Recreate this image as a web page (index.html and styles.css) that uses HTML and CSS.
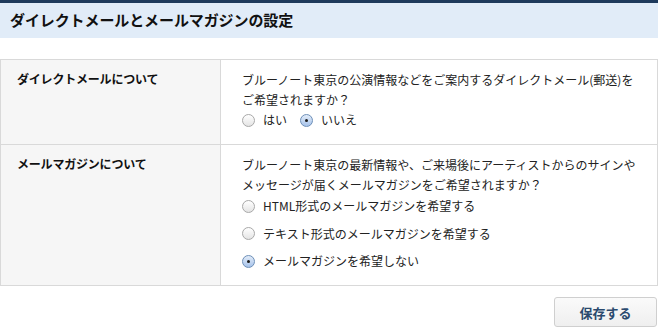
FILE: index.html
```html
<!DOCTYPE html>
<html lang="ja">
<head>
<meta charset="utf-8">
<link rel="stylesheet" href="styles.css">
</head>
<body>
<div class="page">
  <h1 class="title">ダイレクトメールとメールマガジンの設定</h1>
  <div class="table">
    <div class="row">
      <div class="label">ダイレクトメールについて</div>
      <div class="cell">
        <p class="q">ブルーノート東京の公演情報などをご案内するダイレクトメール(郵送)を<br>ご希望されますか？</p>
        <div class="inline-opts">
          <label class="opt"><span class="radio"></span>はい</label>
          <label class="opt"><span class="radio on"></span>いいえ</label>
        </div>
      </div>
    </div>
    <div class="row">
      <div class="label">メールマガジンについて</div>
      <div class="cell">
        <p class="q">ブルーノート東京の最新情報や、ご来場後にアーティストからのサインや<br>メッセージが届くメールマガジンをご希望されますか？</p>
        <div class="stack-opts">
          <label class="opt"><span class="radio"></span>HTML形式のメールマガジンを希望する</label>
          <label class="opt"><span class="radio"></span>テキスト形式のメールマガジンを希望する</label>
          <label class="opt"><span class="radio on"></span>メールマガジンを希望しない</label>
        </div>
      </div>
    </div>
  </div>
  <div class="actions">
    <button class="save">保存する</button>
  </div>
</div>
</body>
</html>
```

FILE: styles.css
```css
html, body {
  margin: 0;
  padding: 0;
  background: #fff;
}
body {
  font-family: "Noto Sans CJK JP", "Noto Sans", sans-serif;
  color: #222;
  width: 658px;
}
.page {
  border-top: 3px solid #1e3a5c;
}
.title {
  margin: 0;
  background: #e1ecf8;
  height: 35px;
  line-height: 34px;
  padding-left: 10px;
  font-size: 15px;
  font-weight: bold;
  color: #111;
  letter-spacing: -0.1px;
}
.table {
  margin-top: 21px;
  border: 1px solid #d9d9d9;
  border-bottom: none;
}
.row {
  display: flex;
  border-bottom: 1px solid #d9d9d9;
}
.label {
  width: 203px;
  flex: none;
  background: #f6f6f6;
  border-right: 1px solid #d9d9d9;
  padding: 10px 0 0 16px;
  font-size: 12px;
  font-weight: bold;
  color: #111;
  line-height: 18px;
  letter-spacing: -0.2px;
}
.cell {
  flex: 1;
  padding: 10px 0 14px 21px;
  font-size: 12px;
  color: #222;
}
.q {
  margin: 0;
  line-height: 20px;
}
.inline-opts {
  display: flex;
  gap: 13px;
  height: 20px;
  align-items: center;
}
.stack-opts {
  display: flex;
  flex-direction: column;
  gap: 7.5px;
  margin-top: 1px;
}
.stack-opts .opt {
  height: 20px;
}
.opt {
  display: flex;
  align-items: center;
  gap: 8px;
  line-height: 20px;
}
.radio {
  width: 13px;
  height: 13px;
  border-radius: 50%;
  border: 1px solid #a8a8a8;
  background: linear-gradient(#ffffff, #e4e4e4);
  box-sizing: border-box;
  flex: none;
  position: relative;
}
.radio.on {
  border-color: #6d8fb8;
  background: linear-gradient(#e2ecf9, #a7c3ea);
}
.radio.on::after {
  content: "";
  position: absolute;
  left: 4px;
  top: 4px;
  width: 3px;
  height: 3px;
  border-radius: 50%;
  background: #1a1a1a;
}
.actions {
  display: flex;
  justify-content: flex-end;
  padding: 11px 1px 0 0;
}
.save {
  width: 103px;
  height: 30px;
  border: 1px solid #cfcfcf;
  border-radius: 3px;
  background: linear-gradient(#fafafa, #efefef);
  font-family: "Noto Sans CJK JP", sans-serif;
  font-size: 13px;
  font-weight: bold;
  color: #2b4a6e;
  padding: 0;
}
```
